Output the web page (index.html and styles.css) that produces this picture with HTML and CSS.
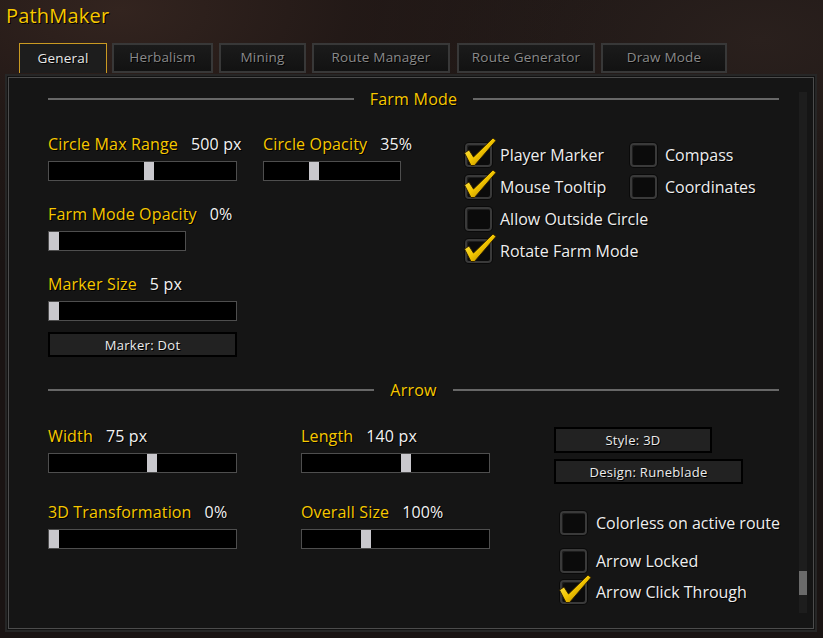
FILE: index.html
```html
<!DOCTYPE html>
<html lang="en">
<head>
<meta charset="utf-8">
<title>PathMaker</title>
<link rel="stylesheet" href="styles.css">
</head>
<body>
<div class="app">
  <h1 class="title">PathMaker</h1>
  <nav class="tabs">
    <div class="tab active t-general">General</div>
    <div class="tab t-herb">Herbalism</div>
    <div class="tab t-mining">Mining</div>
    <div class="tab t-route">Route Manager</div>
    <div class="tab t-gen">Route Generator</div>
    <div class="tab t-draw">Draw Mode</div>
  </nav>
  <section class="panel">
    <div class="content">
      <div class="sec-head"><span class="line"></span><span class="sec-title">Farm Mode</span><span class="line"></span></div>
      <div class="farm">
        <div class="farm-left">
          <div class="row row-a">
            <div class="group w189">
              <div class="lbl"><span class="name">Circle Max Range</span><span class="val">500 px</span></div>
              <div class="slider"><div class="thumb" style="margin-left:95px"></div></div>
            </div>
            <div class="group w138 gap-left">
              <div class="lbl"><span class="name">Circle Opacity</span><span class="val">35%</span></div>
              <div class="slider"><div class="thumb" style="margin-left:45px"></div></div>
            </div>
          </div>
          <div class="group w138 row-b">
            <div class="lbl"><span class="name">Farm Mode Opacity</span><span class="val">0%</span></div>
            <div class="slider"><div class="thumb" style="margin-left:0px"></div></div>
          </div>
          <div class="group w189 row-b">
            <div class="lbl"><span class="name">Marker Size</span><span class="val">5 px</span></div>
            <div class="slider"><div class="thumb" style="margin-left:0px"></div></div>
          </div>
          <div class="btn w189 btn-marker">Marker: Dot</div>
        </div>
        <div class="farm-checks">
          <div class="check"><span class="box on"><svg class="tick" viewBox="0 0 34 32"><defs><linearGradient id="g1" x1="0" y1="0" x2="1" y2="1"><stop offset="0" stop-color="#fff06a"/><stop offset="0.5" stop-color="#f2c500"/><stop offset="1" stop-color="#9a6a00"/></linearGradient></defs><path d="M1.5 16 L6 13 L10.5 20 L30 1 L33 3.5 L11.5 28.5 L8 28.5 Z" fill="url(#g1)" stroke="#2b1d00" stroke-width="0.9"/></svg></span><span class="ctext">Player Marker</span></div>
          <div class="check"><span class="box"></span><span class="ctext">Compass</span></div>
          <div class="check"><span class="box on"><svg class="tick" viewBox="0 0 34 32"><path d="M1.5 16 L6 13 L10.5 20 L30 1 L33 3.5 L11.5 28.5 L8 28.5 Z" fill="url(#g1)" stroke="#2b1d00" stroke-width="0.9"/></svg></span><span class="ctext">Mouse Tooltip</span></div>
          <div class="check"><span class="box"></span><span class="ctext">Coordinates</span></div>
          <div class="check span2"><span class="box"></span><span class="ctext">Allow Outside Circle</span></div>
          <div class="check span2"><span class="box on"><svg class="tick" viewBox="0 0 34 32"><path d="M1.5 16 L6 13 L10.5 20 L30 1 L33 3.5 L11.5 28.5 L8 28.5 Z" fill="url(#g1)" stroke="#2b1d00" stroke-width="0.9"/></svg></span><span class="ctext">Rotate Farm Mode</span></div>
        </div>
      </div>

      <div class="sec-head arrow-head"><span class="line"></span><span class="sec-title">Arrow</span><span class="line"></span></div>
      <div class="arrow">
        <div class="col">
          <div class="group w189 r1">
            <div class="lbl"><span class="name">Width</span><span class="val">75 px</span></div>
            <div class="slider"><div class="thumb" style="margin-left:98px"></div></div>
          </div>
          <div class="group w189 r2">
            <div class="lbl"><span class="name">3D Transformation</span><span class="val">0%</span></div>
            <div class="slider"><div class="thumb" style="margin-left:0px"></div></div>
          </div>
        </div>
        <div class="col">
          <div class="group w189 r1">
            <div class="lbl"><span class="name">Length</span><span class="val">140 px</span></div>
            <div class="slider"><div class="thumb" style="margin-left:99px"></div></div>
          </div>
          <div class="group w189 r2">
            <div class="lbl"><span class="name">Overall Size</span><span class="val">100%</span></div>
            <div class="slider"><div class="thumb" style="margin-left:59px"></div></div>
          </div>
        </div>
        <div class="col col-right">
          <div class="btn btn-style">Style: 3D</div>
          <div class="btn w189 btn-design">Design: Runeblade</div>
          <div class="check c1"><span class="box"></span><span class="ctext">Colorless on active route</span></div>
          <div class="check c2"><span class="box"></span><span class="ctext">Arrow Locked</span></div>
          <div class="check c3"><span class="box on"><svg class="tick" viewBox="0 0 34 32"><path d="M1.5 16 L6 13 L10.5 20 L30 1 L33 3.5 L11.5 28.5 L8 28.5 Z" fill="url(#g1)" stroke="#2b1d00" stroke-width="0.9"/></svg></span><span class="ctext">Arrow Click Through</span></div>
        </div>
      </div>
    </div>
    <div class="scrollbar"><div class="sthumb"></div></div>
  </section>
</div>
</body>
</html>
```

FILE: styles.css
```css
html, body {
  margin: 0;
  padding: 0;
}
body {
  width: 823px;
  height: 638px;
  overflow: hidden;
  font-family: "Open Sans", "DejaVu Sans", sans-serif;
  background:
    radial-gradient(ellipse 520px 260px at 120px 10px, #33241f 0%, rgba(40,28,25,0.6) 45%, rgba(0,0,0,0) 100%),
    radial-gradient(ellipse 400px 200px at 760px 40px, #2a201d 0%, rgba(0,0,0,0) 100%),
    #1a1413;
}
.app {
  display: flex;
  flex-direction: column;
}
.title {
  margin: 0;
  padding-left: 6px;
  height: 32px;
  line-height: 32px;
  font-size: 20px;
  font-weight: 400;
  color: #f7c800;
  letter-spacing: 0.2px;
  text-shadow: 1px 1px 0 #000;
}
.tabs {
  display: flex;
  margin-top: 11px;
  padding-left: 19px;
  height: 30px;
}
.tab {
  box-sizing: border-box;
  height: 30px;
  margin-right: 6px;
  padding-bottom: 2px;
  border: 2px solid #383838;
  background: linear-gradient(#1b1b1b, #121212);
  color: #8a8a8a;
  font-size: 13.5px;
  display: flex;
  align-items: center;
  justify-content: center;
  text-shadow: 1px 1px 0 #000;
  letter-spacing: 0.2px;
}
.tab.active {
  border: 1px solid #c99a22;
  border-bottom: none;
  background: #1d1d1d;
  color: #e8e8e8;
}
.t-general { width: 88px; margin-right: 5px; }
.t-herb { width: 101px; }
.t-mining { width: 87px; }
.t-route { width: 138px; margin-right: 7px; }
.t-gen { width: 138px; }
.t-draw { width: 126px; }

.panel {
  box-sizing: border-box;
  margin-top: 4px;
  margin-left: 8px;
  width: 806px;
  height: 552px;
  border: 1px solid #4c4c4c;
  background: #151515;
  box-shadow: 0 0 0 1px #121212, 0 0 0 3px #262626;
  display: flex;
}
.content {
  width: 731px;
  padding-left: 39px;
}
.sec-head {
  display: flex;
  align-items: center;
  height: 20px;
  margin-top: 11px;
}
.sec-head .line {
  flex: 1;
  height: 2px;
  background: #676767;
}
.sec-title {
  margin: 0 16px;
  color: #f7c800;
  font-size: 16px;
  letter-spacing: 0.25px;
  text-shadow: 1px 1px 0 #000;
}
.arrow-head {
  margin-top: 23px;
}

.farm {
  display: flex;
}
.farm-left {
  width: 353px;
  display: flex;
  flex-direction: column;
}
.row {
  display: flex;
}
.row-a {
  margin-top: 26px;
}
.row-b {
  margin-top: 24px;
}
.gap-left {
  margin-left: 26px;
}
.group {
  display: flex;
  flex-direction: column;
}
.w189 { width: 189px; }
.w138 { width: 138px; }
.lbl {
  height: 18px;
  line-height: 18px;
  margin-bottom: 8px;
  font-size: 16px;
  letter-spacing: 0.15px;
  white-space: nowrap;
  text-shadow: 1px 1px 0 #000;
}
.name {
  color: #f7c800;
}
.val {
  color: #f2f2f2;
  margin-left: 13px;
}
.slider {
  box-sizing: border-box;
  height: 20px;
  border: 1px solid #4e4e4e;
  background: #000;
  display: flex;
}
.thumb {
  width: 10px;
  height: 18px;
  background: #c9c8cd;
}
.btn {
  box-sizing: border-box;
  height: 25px;
  border: 2px solid #000;
  background: #222222;
  color: #ececec;
  font-size: 13px;
  letter-spacing: 0.3px;
  display: flex;
  align-items: center;
  justify-content: center;
  text-shadow: 1px 1px 0 #000;
}
.btn-marker {
  margin-top: 11px;
}
.farm-checks {
  margin-left: 64px;
  margin-top: 34px;
  display: grid;
  grid-template-columns: 165px auto;
  row-gap: 8px;
  align-content: start;
}
.span2 {
  grid-column: 1 / span 2;
}
.check {
  display: flex;
  align-items: center;
  height: 24px;
}
.box {
  position: relative;
  box-sizing: border-box;
  width: 27px;
  height: 24px;
  margin-right: 8px;
  border: 2px solid #3a3a3a;
  border-radius: 4px;
  background: #0b0b0b;
  box-shadow: inset 1px 1px 0 #1e1e1e, 0 0 0 1px #0a0a0a;
  flex: none;
}
.tick {
  position: absolute;
  left: -4px;
  top: -8px;
  width: 34px;
  height: 32px;
  overflow: visible;
}
.ctext {
  color: #eeeeee;
  font-size: 16px;
  letter-spacing: 0;
  white-space: nowrap;
  text-shadow: 1px 1px 0 #000;
}

.arrow {
  display: flex;
}
.col {
  width: 189px;
  margin-right: 64px;
  display: flex;
  flex-direction: column;
}
.r1 { margin-top: 27px; }
.r2 { margin-top: 30px; }
.col-right {
  width: auto;
  margin-right: 0;
}
.btn-style {
  width: 158px;
  height: 26px;
  margin-top: 27px;
}
.btn-design {
  margin-top: 6px;
}
.col-right .check {
  margin-left: 6px;
}
.col-right .box {
  margin-right: 9px;
}
.c1 { margin-top: 27px; }
.c2 { margin-top: 14px; }
.c3 { margin-top: 7px; }

.scrollbar {
  box-sizing: border-box;
  width: 8px;
  margin-left: 20px;
  margin-top: 14px;
  height: 521px;
  background: #1d1d1d;
  display: flex;
  flex-direction: column;
  justify-content: flex-end;
  padding-bottom: 18px;
}
.sthumb {
  height: 24px;
  background: #6a6a6a;
}
```
